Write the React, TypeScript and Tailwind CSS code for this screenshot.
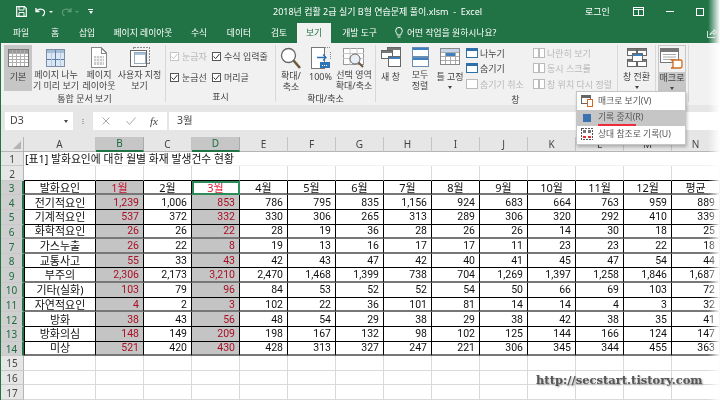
import type { ReactNode } from 'react'

const KR = 'font-["Noto_Sans","Noto_Sans_CJK_KR",sans-serif]'

const rows = [
  ['전기적요인', '1,239', '1,006', '853', '786', '795', '835', '1,156', '924', '683', '664', '763', '959', '889'],
  ['기계적요인', '537', '372', '332', '330', '306', '265', '313', '289', '306', '320', '292', '410', '339'],
  ['화학적요인', '26', '26', '22', '28', '19', '36', '28', '26', '26', '14', '30', '18', '25'],
  ['가스누출', '26', '22', '8', '19', '13', '16', '17', '17', '11', '23', '23', '22', '18'],
  ['교통사고', '55', '33', '43', '42', '43', '47', '42', '40', '41', '45', '47', '54', '44'],
  ['부주의', '2,306', '2,173', '3,210', '2,470', '1,468', '1,399', '738', '704', '1,269', '1,397', '1,258', '1,846', '1,687'],
  ['기타(실화)', '103', '79', '96', '84', '53', '52', '52', '54', '50', '66', '69', '103', '72'],
  ['자연적요인', '4', '2', '3', '102', '22', '36', '101', '81', '14', '14', '4', '3', '32'],
  ['방화', '38', '43', '56', '48', '54', '29', '38', '29', '38', '42', '38', '35', '41'],
  ['방화의심', '148', '149', '209', '198', '167', '132', '98', '102', '125', '144', '166', '124', '147'],
  ['미상', '521', '420', '430', '428', '313', '327', '247', '221', '306', '345', '344', '455', '363'],
]
const header = ['발화요인', '1월', '2월', '3월', '4월', '5월', '6월', '7월', '8월', '9월', '10월', '11월', '12월', '평균']
const letters = ['A', 'B', 'C', 'D', 'E', 'F', 'G', 'H', 'I', 'J', 'K', 'L', 'M', 'N']
// some horizontal rules in the sheet look thicker and gray
const softRows = [3, 6, 7, 9, 11, 14]

function RowNum({ n }: { n: number }) {
  const on = n >= 3 && n <= 14
  return (
    <div className={`flex items-center justify-center pt-[1px] text-[10px] leading-[12px] border-b border-[#c8c8c8] ${on ? 'bg-[#cfcfcf] text-[#1d6b3f] border-r-2 border-r-[#217346]' : 'bg-[#e6e6e6] text-[#444] border-r border-r-[#b5b5b5]'}`}>
      {n}
    </div>
  )
}

function Cell({ row, col, text }: { row: number; col: number; text?: string }) {
  const inTable = row >= 3 && row <= 14
  const gray = inTable && row > 3 && (col === 1 || col === 3)
  const headGray = row === 3 && col === 1
  const selected = row === 3 && col === 3
  const soft = softRows.includes(row)
  let line = 'border-r border-b border-[#d9d9d9]'
  if (row === 2 && !text) line = 'border-r border-[#d9d9d9] border-b border-b-black'
  if (inTable) line = `border-r border-r-black border-b ${soft ? 'border-b-2 border-b-[#777]' : 'border-b-black'}`
  if (inTable && col === 0) line += ' border-l border-l-black'
  let color = 'text-[#111]'
  if (gray) color = 'text-[#a80f26]'
  if (headGray) color = 'text-[#c8102e]'
  if (selected) color = 'text-[#e2203c]'
  const align = row === 3 || col === 0 ? 'justify-center' : 'justify-end pr-[4px]'
  const type = col === 0 || row === 3 ? 'text-[11px]' : 'text-[10.5px] font-["Roboto",sans-serif]'
  return (
    <div className={`flex items-center pt-[1px] leading-[12px] whitespace-nowrap min-w-0 ${line} ${align} ${color} ${gray || headGray ? 'bg-[#c4c4c4]' : 'bg-white'} ${selected ? 'outline-2 -outline-offset-2 outline-[#2e8b5a]' : ''} ${type}`}>
      {text}
    </div>
  )
}

function Sheet() {
  return (
    <div className={`grid grid-cols-[23px_72px_repeat(13,48px)] auto-rows-[14.62px] ${KR}`}>
      <div className="relative bg-[#e6e6e6] border-r border-b border-[#b5b5b5]">
        <div className="absolute right-[2px] bottom-[2px] w-0 h-0 border-l-[8px] border-l-transparent border-b-[8px] border-b-[#b4b4b4]" />
      </div>
      {letters.map((l, i) => (
        <div key={l} className={`flex items-center justify-center text-[10px] leading-[12px] border-r ${i === 1 || i === 3 ? 'bg-[#c6c6c6] border-b-2 border-b-[#217346] border-r-[#aaa] text-[#1d6b3f]' : 'bg-[#e6e6e6] border-b border-b-[#b5b5b5] border-r-[#c4c4c4] text-[#444]'}`}>
          {l}
        </div>
      ))}

      <RowNum n={1} />
      <div className="col-span-14 flex items-center pl-[1px] pt-[1px] text-[10.8px] leading-[12px] text-[#111] whitespace-nowrap border-b border-[#f2f2f2] bg-white">
        [표1] 발화요인에 대한 월별 화재 발생건수 현황
      </div>

      <RowNum n={2} />
      {letters.map((_, i) => <Cell key={i} row={2} col={i} />)}

      <RowNum n={3} />
      {header.map((h, i) => <Cell key={i} row={3} col={i} text={h} />)}

      {rows.map((r, y) => [
        <RowNum key={`n${y}`} n={y + 4} />,
        ...r.map((t, i) => <Cell key={`${y}-${i}`} row={y + 4} col={i} text={t} />),
      ])}

      {[15, 16, 17].map(n => [
        <RowNum key={n} n={n} />,
        ...letters.map((_, i) => <Cell key={`${n}-${i}`} row={n} col={i} />),
      ])}
    </div>
  )
}

function Ico({ w = 22, h = 22, children }: { w?: number; h?: number; children: ReactNode }) {
  return <svg className="shrink-0" width={w} height={h} viewBox={`0 0 ${w} ${h}`} fill="none" shapeRendering="crispEdges">{children}</svg>
}

const NormalIcon = () => (
  <Ico w={21} h={19}>
    <rect x="0.5" y="0.5" width="20" height="17" fill="#fff" stroke="#777" />
    <rect x="1" y="1" width="19" height="3" fill="#9a9a9a" />
    {[4, 7, 10, 13].map(y => <path key={y} d={`M1 ${y + 0.5}H20`} stroke="#b0b0b0" />)}
    {[4, 8, 12, 16].map(x => <path key={x} d={`M${x + 0.5} 1V17`} stroke="#b0b0b0" />)}
  </Ico>
)
const BreakIcon = () => (
  <Ico w={20} h={19}>
    <rect x="0.5" y="0.5" width="18" height="17" fill="#dbe7f4" stroke="#7b8ea5" />
    <rect x="1" y="1" width="17" height="3" fill="#a5bcd6" />
    <path d="M9.5 1V17M1 10.5H18" stroke="#5d7fa6" />
    {[5, 14].map(x => <path key={x} d={`M${x + 0.5} 4V17`} stroke="#b6c8dc" />)}
  </Ico>
)
const LayoutIcon = () => (
  <Ico w={16} h={21}>
    <path d="M0.5 0.5H10L15 5.5V20.5H0.5Z" fill="#fff" stroke="#888" />
    <path d="M10 1V6H15" stroke="#888" />
    <rect x="3" y="9" width="10" height="9" fill="#c9c9c9" />
    {[5, 8, 11].map(x => <path key={x} d={`M${x + 0.5} 9V18`} stroke="#f1f1f1" />)}
    {[11, 14].map(y => <path key={y} d={`M3 ${y + 0.5}H13`} stroke="#f1f1f1" />)}
  </Ico>
)
const CustomIcon = () => (
  <Ico w={20} h={21}>
    <rect x="3.5" y="0.5" width="16" height="16" stroke="#888" strokeDasharray="2 1" />
    <rect x="0.5" y="3.5" width="16" height="16" fill="#fff" stroke="#666" />
    <rect x="4.5" y="5.5" width="11" height="11" fill="#fff" stroke="#9ab" />
    <rect x="5" y="6" width="10" height="2" fill="#a9c3de" />
  </Ico>
)
const GlassIcon = () => (
  <svg className="shrink-0" width="22" height="23" viewBox="0 0 22 23" fill="none">
    <circle cx="8.5" cy="8.5" r="7" fill="#fff" stroke="#666" strokeWidth="1.3" />
    <path d="M13.5 13.5L20 21" stroke="#6d5a3a" strokeWidth="2.6" />
  </svg>
)
const HundredIcon = () => (
  <Ico w={20} h={23}>
    <path d="M0.5 0.5H11M12 0.5H19.5" stroke="#888" strokeDasharray="1 1" />
    <path d="M0.5 0.5H13V21.5H0.5Z" fill="#fff" stroke="#777" />
    <path d="M19.5 5V13" stroke="#888" strokeDasharray="1 1" />
    <path d="M6 10.5H15M12 7.5L15 10.5L12 13.5" stroke="#2a6fb5" strokeWidth="1.3" shapeRendering="auto" />
    <rect x="9" y="15" width="10" height="6" fill="#2f75b5" />
    <path d="M11 18H17" stroke="#fff" strokeDasharray="1 1" />
  </Ico>
)
const SelZoomIcon = () => (
  <svg className="shrink-0" width="22" height="21" viewBox="0 0 22 21" fill="none">
    <rect x="0.5" y="0.5" width="20" height="16" fill="#fff" stroke="#999" />
    <path d="M0 5.5H21M0 10.5H21M7 0V17M14 0V17" stroke="#c5c5c5" />
    <circle cx="12" cy="11" r="5" fill="#e8eff7" stroke="#666" />
    <path d="M15.5 14.5L20 19" stroke="#6d5a3a" strokeWidth="2" />
  </svg>
)
const Win = ({ x, y, w, h, fill = '#777' }: { x: number; y: number; w: number; h: number; fill?: string }) => (
  <>
    <rect x={x + 0.5} y={y + 0.5} width={w} height={h} fill="#fff" stroke="#666" />
    <rect x={x + 1} y={y + 1} width={w - 1} height="2" fill={fill} />
  </>
)
const NewWinIcon = () => (
  <Ico w={20} h={20}>
    <Win x={6} y={0} w={13} h={9} />
    <Win x={0} y={3} w={11} h={8} />
    <Win x={7} y={9} w={12} h={10} fill="#3f7fbf" />
  </Ico>
)
const ArrangeIcon = () => (
  <Ico w={17} h={20}>
    <rect x="0.5" y="0.5" width="16" height="9" fill="#fff" stroke="#6b8db3" />
    <rect x="1" y="1" width="15" height="2" fill="#3f7fbf" />
    <rect x="0.5" y="10.5" width="16" height="9" fill="#fff" stroke="#6b8db3" />
    <rect x="1" y="11" width="15" height="2" fill="#3f7fbf" />
  </Ico>
)
const FreezeIcon = () => (
  <Ico w={20} h={18}>
    <rect x="0.5" y="0.5" width="19" height="16" fill="#fff" stroke="#888" />
    {[4, 8, 12].map(y => <path key={y} d={`M1 ${y + 0.5}H19`} stroke="#aaa" />)}
    {[5, 10, 15].map(x => <path key={x} d={`M${x + 0.5} 1V16`} stroke="#aaa" />)}
    <rect x="6" y="5" width="9" height="3" fill="#3f7fbf" />
    <rect x="1" y="1" width="18" height="3" fill="#c5d6e8" />
  </Ico>
)
const SwitchIcon = () => (
  <Ico w={20} h={19}>
    <Win x={0} y={0} w={9} h={7} />
    <Win x={10} y={0} w={9} h={7} />
    <Win x={0} y={11} w={9} h={7} />
    <Win x={10} y={11} w={9} h={7} />
    <Win x={5} y={5} w={10} h={8} fill="#3f7fbf" />
  </Ico>
)
const MacroIcon = () => (
  <svg className="shrink-0" width="24" height="21" viewBox="0 0 24 21" fill="none">
    <rect x="0.5" y="0.5" width="18" height="14" fill="#fff" stroke="#777" />
    <rect x="1" y="1" width="17" height="3" fill="#777" />
    <path d="M3 6.5H16M3 9H16M3 11.5H16" stroke="#aaa" />
    <path d="M11.5 12H20.5C21.5 12 22 13 22 13.5V18C22 19.5 21 20 20 20H11C12 20 13 19.5 13 18V13.5Z" fill="#fff" stroke="#d2691e" strokeWidth="1.3" />
  </svg>
)
const SmallWin = ({ color = '#2f6fa8', bar = true }: { color?: string; bar?: boolean }) => (
  <Ico w={12} h={11}>
    <rect x="0.5" y="0.5" width="11" height="9" fill="#fff" stroke={color} />
    {bar && <rect x="1" y="1" width="10" height="2" fill={color} />}
  </Ico>
)
const PairIcon = () => (
  <Ico w={12} h={11}>
    <rect x="0.5" y="0.5" width="5" height="9" fill="#fff" stroke="#bbb" />
    <rect x="6.5" y="0.5" width="5" height="9" fill="#fff" stroke="#bbb" />
  </Ico>
)

function Caret() {
  return <div className="w-0 h-0 border-x-[2.5px] border-x-transparent border-t-[3px] border-t-[#444]" />
}

function Big({ w, icon, lines, caret, active, iconBox = 'pt-[4px]' }: { w: number; icon: ReactNode; lines: string[]; caret?: boolean; active?: boolean; iconBox?: string }) {
  return (
    <div style={{ width: w }} className={`shrink-0 h-[46px] flex flex-col items-center text-[9px] leading-[11px] text-[#444] whitespace-nowrap ${active ? 'bg-[#c6c6c6] text-[#333]' : ''}`}>
      <div className={`h-[26px] flex justify-center ${iconBox}`}>{icon}</div>
      {lines.map(l => <div key={l}>{l}</div>)}
      {caret && <div className="mt-[4px]"><Caret /></div>}
    </div>
  )
}

function Group({ w, label, children }: { w: number; label: string; children: ReactNode }) {
  return (
    <div style={{ width: w }} className="shrink-0 flex flex-col border-r border-[#d8d8d8] h-[57px] mt-[2px]">
      <div className="flex h-[47px]">{children}</div>
      <div className="text-[9px] leading-[10px] text-[#444] text-center mt-[3px]">{label}</div>
    </div>
  )
}

function Check({ label, on = true, off }: { label: string; on?: boolean; off?: boolean }) {
  return (
    <div className={`flex items-center gap-[3px] text-[9px] leading-[13px] whitespace-nowrap ${off ? 'text-[#b5b5b5]' : 'text-[#444]'}`}>
      <div className={`w-[9px] h-[9px] shrink-0 border flex items-center justify-center bg-white ${off ? 'border-[#c5c5c5]' : 'border-[#555]'}`}>
        {on && (
          <svg width="7" height="7" viewBox="0 0 7 7" fill="none">
            <path d="M0.5 3.5L2.7 5.6L6.4 1" stroke={off ? '#c5c5c5' : '#333'} />
          </svg>
        )}
      </div>
      {label}
    </div>
  )
}

function SmallItem({ icon, label, off }: { icon: ReactNode; label: string; off?: boolean }) {
  return (
    <div className={`flex items-center gap-[2px] text-[9px] leading-[11px] whitespace-nowrap h-[15.3px] ${off ? 'text-[#b8b8b8]' : 'text-[#444]'}`}>
      {icon}
      {label}
    </div>
  )
}

function Ribbon() {
  return (
    <div className="relative h-[62px] flex pl-[3px] bg-[#f1f1f1]">
      <Group w={162} label="통합 문서 보기">
        <Big w={28} active icon={<NormalIcon />} lines={['기본']} />
        <Big w={48} icon={<BreakIcon />} lines={['페이지 나누', '기 미리 보기']} />
        <Big w={38} icon={<LayoutIcon />} lines={['페이지', '레이아웃']} iconBox="pt-[2px]" />
        <Big w={43} icon={<CustomIcon />} lines={['사용자 지정', '보기']} iconBox="pt-[2px]" />
      </Group>
      <Group w={110} label="표시">
        <div className="flex flex-col gap-[8px] pl-[4px] pt-[5px] w-[46px]">
          <Check label="눈금자" off />
          <Check label="눈금선" />
        </div>
        <div className="flex flex-col gap-[8px] pt-[5px]">
          <Check label="수식 입력줄" />
          <Check label="머리글" />
        </div>
      </Group>
      <Group w={100} label="확대/축소">
        <Big w={30} icon={<GlassIcon />} lines={['확대/', '축소']} iconBox="pt-[2px]" />
        <Big w={29} icon={<HundredIcon />} lines={['100%']} iconBox="pt-[2px]" />
        <Big w={38} icon={<SelZoomIcon />} lines={['선택 영역', '확대/축소']} iconBox="pt-[3px]" />
      </Group>
      <Group w={280} label="창">
        <div className="w-[1px]" />
        <Big w={29} icon={<NewWinIcon />} lines={['새 창']} iconBox="pt-[2px]" />
        <Big w={30} icon={<ArrangeIcon />} lines={['모두', '정렬']} iconBox="pt-[2px]" />
        <Big w={30} icon={<FreezeIcon />} lines={['틀 고정']} caret iconBox="pt-[3px]" />
        <div className="w-[66px] shrink-0 pl-[1px] pt-[1px] flex flex-col">
          <SmallItem icon={<SmallWin />} label="나누기" />
          <SmallItem icon={<SmallWin color="#2f6fa8" />} label="숨기기" />
          <SmallItem icon={<SmallWin color="#bbb" bar={false} />} label="숨기기 취소" off />
        </div>
        <div className="w-[87px] shrink-0 pl-[2px] pt-[1px] flex flex-col border-r border-[#d8d8d8]">
          <SmallItem icon={<PairIcon />} label="나란히 보기" off />
          <SmallItem icon={<PairIcon />} label="동시 스크롤" off />
          <SmallItem icon={<PairIcon />} label="창 위치 다시 정렬" off />
        </div>
        <Big w={37} icon={<SwitchIcon />} lines={['창 전환']} caret iconBox="pt-[3px]" />
      </Group>
      <Group w={33} label="">
        <div className="w-[2px]" />
        <div className="border border-[#c6c6c6] h-[46px] w-[28px] shrink-0">
          <Big w={26} active icon={<MacroIcon />} lines={['매크로']} caret iconBox="pt-[2px] bg-[#f1f1f1] w-full" />
        </div>
      </Group>
    </div>
  )
}

function MenuItem({ icon, label, hot, mark }: { icon: ReactNode; label: string; hot?: boolean; mark?: boolean }) {
  return (
    <div className={`relative h-[16.5px] flex items-center text-[8.8px] whitespace-nowrap text-[#555] ${hot ? 'bg-[#c6c6c6] text-[#333]' : ''}`}>
      <div className="w-[20px] flex justify-center">{icon}</div>
      <span className="ml-[1px]">{label}</span>
      {mark && <div className="absolute left-[21px] top-[14px] w-[38px] h-[2px] bg-[#ee2b3b]" />}
    </div>
  )
}

function MacroMenu() {
  return (
    <div className={`absolute left-[575px] top-[91px] w-[110px] bg-white border border-[#c6c6c6] shadow-[1px_2px_3px_rgba(0,0,0,0.25)] py-[1px] ${KR}`}>
      <MenuItem
        label="매크로 보기(V)"
        icon={
          <Ico w={13} h={12}>
            <rect x="0.5" y="0.5" width="9" height="8" fill="#fff" stroke="#666" />
            <rect x="1" y="1" width="8" height="2" fill="#666" />
            <rect x="6.5" y="4.5" width="5" height="7" fill="#fff" stroke="#d2691e" />
          </Ico>
        }
      />
      <MenuItem hot mark label="기록 중지(R)" icon={<div className="w-[8px] h-[8px] bg-[#3a73b0]" />} />
      <MenuItem
        label="상대 참조로 기록(U)"
        icon={
          <Ico w={12} h={12}>
            <rect x="0.5" y="0.5" width="11" height="11" fill="#fff" stroke="#555" strokeDasharray="2 1" />
            <rect x="2" y="2" width="3" height="3" fill="#777" />
            <rect x="7" y="2" width="3" height="3" fill="#777" />
            <rect x="2" y="8" width="3" height="2" fill="#d33" />
            <rect x="7" y="8" width="3" height="2" fill="#d33" />
          </Ico>
        }
      />
    </div>
  )
}

function TitleBar() {
  return (
    <div className="h-[23px] flex items-center text-white bg-[#217346] text-[9px]">
      <div className="w-[272px] shrink-0 flex items-center">
        <svg className="ml-[15px] shrink-0" width="11" height="11" viewBox="0 0 11 11" fill="none">
          <path d="M0.7 0.7H8.5L10.3 2.5V10.3H0.7Z" stroke="#fff" strokeWidth="1.2" />
          <path d="M3 1V4H8V1M3 10V6.5H8V10" stroke="#fff" />
        </svg>
        <svg className="ml-[8px] shrink-0" width="11" height="10" viewBox="0 0 11 10" fill="none">
          <path d="M1 1V4.500H4.500M1.200 4.300C3 1.800 7 1.500 9 3.500C10 5 9.600 7.500 7.500 9" stroke="#fff" strokeWidth="1.3" />
        </svg>
        <div className="ml-[3px] w-0 h-0 border-x-[2px] border-x-transparent border-t-[2px] border-t-white" />
        <svg className="ml-[8px] -scale-x-100 shrink-0" width="11" height="10" viewBox="0 0 11 10" fill="none">
          <path d="M1 1V4.500H4.500M1.200 4.300C3 1.800 7 1.500 9 3.500C10 5 9.600 7.500 7.500 9" stroke="#5d9c7a" strokeWidth="1.3" />
        </svg>
        <div className="ml-[3px] w-0 h-0 border-x-[2px] border-x-transparent border-t-[2px] border-t-[#5d9c7a]" />
        <div className="ml-[9px] flex flex-col items-center gap-[1px]">
          <div className="w-[5px] h-[1px] bg-white" />
          <div className="w-0 h-0 border-x-[2.5px] border-x-transparent border-t-[3px] border-t-white" />
        </div>
      </div>
      <div className="w-[199px] shrink-0 whitespace-pre pt-[1px]">2018년 컴활 2급 실기 B형 연습문제 풀이.xlsm  -  Excel</div>
      <div className="ml-[113px] w-[24px] shrink-0 whitespace-nowrap pt-[1px]">로그인</div>
      <svg className="ml-[24px] shrink-0" width="11" height="9" viewBox="0 0 11 9" fill="none" shapeRendering="crispEdges">
        <rect x="0.5" y="0.5" width="10" height="8" stroke="#fff" />
        <path d="M1 2.500H10M5.500 3V8" stroke="#fff" />
      </svg>
      <div className="ml-[22px] w-[8px] h-[1px] bg-white" />
      <div className="ml-[22px] w-[8px] h-[8px] border border-white" />
    </div>
  )
}

function Tabs() {
  const tabs: [string, number][] = [['파일', 34], ['홈', 34], ['삽입', 30], ['페이지 레이아웃', 82], ['수식', 30], ['데이터', 50], ['검토', 30]]
  return (
    <div className="h-[20px] flex items-center text-[8.8px] text-white bg-[#217346]">
      <div className="w-[3px]" />
      {tabs.map(([t, w]) => (
        <div key={t} style={{ width: w }} className="shrink-0 text-center whitespace-nowrap pt-[1px]">{t}</div>
      ))}
      <div className="ml-[3px] w-[34px] h-[20px] shrink-0 bg-[#f1f1f1] text-[#217346] flex items-center justify-center pt-[1px]">보기</div>
      <div className="w-[57px] shrink-0 text-center whitespace-nowrap pt-[1px]">개발 도구</div>
      <svg className="ml-[7px] shrink-0" width="8" height="12" viewBox="0 0 8 12" fill="none">
        <path d="M2.300 8C2 6 .7 5.500 .7 3.700A3.300 3.300 0 0 1 7.300 3.700C7.300 5.500 6 6 5.700 8ZM2.500 10H5.500" stroke="#fff" />
      </svg>
      <div className="ml-[4px] whitespace-nowrap pt-[1px]">어떤 작업을 원하시나요?</div>
      <svg className="ml-auto mr-[3px] shrink-0" width="10" height="10" viewBox="0 0 10 10" fill="none">
        <path d="M.5 3V9.500H8M3 7C3.500 4.500 5 3.500 7 3.500V1.500L9.500 4L7 6.500V5C5 5 4 5.500 3 7Z" stroke="#fff" strokeWidth=".8" />
      </svg>
    </div>
  )
}

function FormulaBar() {
  return (
    <div className="bg-[#e6e6e6] pt-[7px]">
      <div className="h-[18px] flex text-[10.5px] text-[#444]">
        <div className="ml-[4px] w-[68px] bg-white flex items-center pl-[5px] pr-[5px] justify-between">
          D3
          <Caret />
        </div>
        <div className="w-[20px] flex flex-col items-center justify-center gap-[1px]">
          <div className="w-[2px] h-[1px] bg-[#aaa]" />
          <div className="w-[2px] h-[1px] bg-[#aaa]" />
          <div className="w-[2px] h-[1px] bg-[#aaa]" />
        </div>
        <div className="w-[74px] bg-white flex items-center">
          <svg className="ml-[9px] shrink-0" width="8" height="8" viewBox="0 0 8 8" fill="none"><path d="M.5 .5L7.500 7.500M7.500 .5L.5 7.500" stroke="#aaa" /></svg>
          <svg className="ml-[16px] shrink-0" width="10" height="8" viewBox="0 0 10 8" fill="none"><path d="M.5 4L3.500 7.500L9.500 .5" stroke="#aaa" /></svg>
          <span className="ml-[14px] italic text-[11px] font-['Liberation_Serif',serif] text-[#444]">fx</span>
        </div>
        <div className="ml-[2px] flex-1 bg-white flex items-center pl-[8px]">3월</div>
      </div>
      <div className="h-[7px]" />
    </div>
  )
}

export default function App() {
  return (
    <div className={`relative w-[720px] h-[400px] overflow-hidden bg-white border-l border-[#217346] blur-[0.35px] ${KR}`}>
      <TitleBar />
      <Tabs />
      <Ribbon />
      <FormulaBar />
      <Sheet />
      <MacroMenu />
      <div className="absolute top-[373px] left-[535px] text-[11.5px] font-bold font-['DejaVu_Serif',serif] leading-[14px] text-[#555] whitespace-nowrap [text-shadow:1px_1px_2px_rgba(0,0,0,0.35)]">
        http://secstart.tistory.com
      </div>
      <div className="absolute top-0 right-0 bottom-0 w-[12px] bg-gradient-to-r from-transparent to-white" />
    </div>
  )
}
